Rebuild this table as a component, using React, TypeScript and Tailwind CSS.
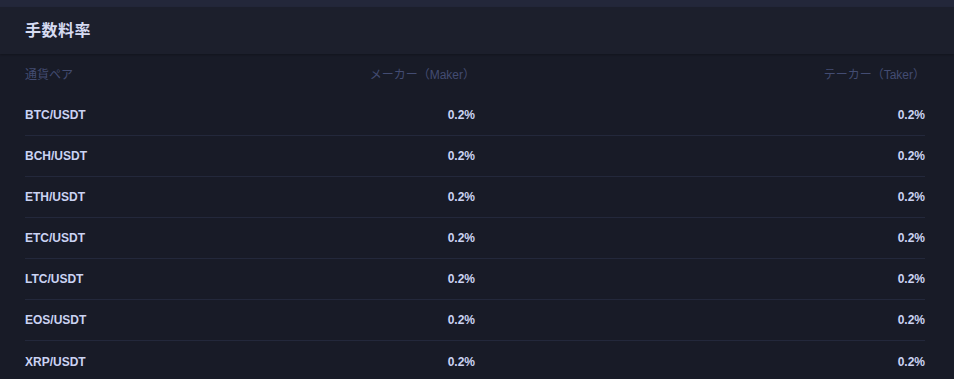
const rows = ["BTC/USDT", "BCH/USDT", "ETH/USDT", "ETC/USDT", "LTC/USDT", "EOS/USDT", "XRP/USDT"];

export default function App() {
  return (
    <div
      className="w-[954px] h-[379px] overflow-hidden bg-[#181b27]"
      style={{ fontFamily: '"Liberation Sans", Arial, "Noto Sans CJK JP", sans-serif' }}
    >
      {/* top strip */}
      <div className="h-[7px] bg-[#23273a]" />

      {/* title */}
      <div className="h-[47px] bg-[#1c1f2c] flex items-center px-[25px] shadow-[0_1px_2px_rgba(0,0,0,0.25)]">
        <h2 className="text-[16px] font-bold text-[#d6dbf2] tracking-[0.5px]">手数料率</h2>
      </div>

      <div className="px-[25px] pr-[29px]">
        {/* column header */}
        <div className="grid grid-cols-[1fr_1fr_2fr] h-[41px] items-center text-[12px] text-[#434c72]">
          <span>通貨ペア</span>
          <span className="text-right">メーカー（Maker）</span>
          <span className="text-right">テーカー（Taker）</span>
        </div>

        {rows.map((pair, i) => (
          <div
            key={pair}
            className={`grid grid-cols-[1fr_1fr_2fr] h-[41px] items-center text-[12px] font-bold text-[#cbd3f3] ${
              i < rows.length - 1 ? "border-b border-[#23283b]" : ""
            }`}
          >
            <span>{pair}</span>
            <span className="text-right">0.2%</span>
            <span className="text-right">0.2%</span>
          </div>
        ))}
      </div>
    </div>
  );
}
